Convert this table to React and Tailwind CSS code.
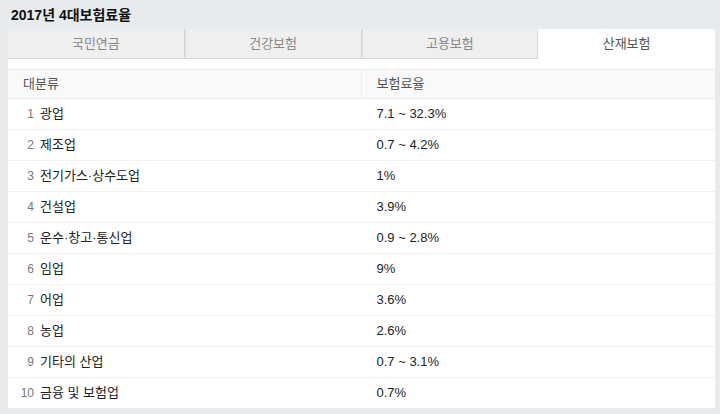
import React, { useState } from 'react';

const tabs = ['국민연금', '건강보험', '고용보험', '산재보험'];

const rows = [
  ['광업', '7.1 ~ 32.3%'],
  ['제조업', '0.7 ~ 4.2%'],
  ['전기가스·상수도업', '1%'],
  ['건설업', '3.9%'],
  ['운수·창고·통신업', '0.9 ~ 2.8%'],
  ['임업', '9%'],
  ['어업', '3.6%'],
  ['농업', '2.6%'],
  ['기타의 산업', '0.7 ~ 3.1%'],
  ['금융 및 보험업', '0.7%'],
];

export default function App() {
  const [active, setActive] = useState(3);

  return (
    <div
      className="w-[720px] h-[414px] overflow-hidden bg-[#e8ebee] pl-[8px] pr-[5px]"
      style={{ fontFamily: '"Liberation Sans", "Noto Sans CJK KR", sans-serif' }}
    >
      <h1 className="h-[29px] pl-[3px] pt-[6px] text-[14px] font-bold leading-[18px] text-[#111]">
        2017년 4대보험료율
      </h1>

      <div className="bg-white">
        {/* tabs */}
        <div className="grid grid-cols-4 h-[30px]">
          {tabs.map((t, i) => (
            <button
              key={t}
              onClick={() => setActive(i)}
              className={
                i === active
                  ? 'bg-white text-[13px] text-[#555]'
                  : 'bg-[#efefef] border-b border-r border-[#d6d6d6] text-[13px] text-[#888]' +
                    (i > 0 ? ' border-l border-l-[#e2e2e2]' : '')
              }
            >
              {t}
            </button>
          ))}
        </div>

        <div className="h-[10px]" />

        {/* table */}
        <div className="border-t border-[#ececec]">
          <div className="grid grid-cols-2 h-[29px] bg-[#f9f9f9] border-b border-[#ececec] text-[13px] text-[#555]">
            <div className="flex items-center pl-[15px] border-r border-[#ececec]">대분류</div>
            <div className="flex items-center pl-[15px]">보험료율</div>
          </div>
          {rows.map(([name, rate], i) => (
            <div key={name} className="grid grid-cols-2 h-[31px] border-b border-[#efefef] text-[13px] text-[#222]">
              <div className="flex items-center">
                <span className="w-[26px] text-right text-[12px] text-[#777]">{i + 1}</span>
                <span className="ml-[6px]">{name}</span>
              </div>
              <div className="flex items-center pl-[15px]">{rate}</div>
            </div>
          ))}
        </div>
      </div>
    </div>
  );
}
